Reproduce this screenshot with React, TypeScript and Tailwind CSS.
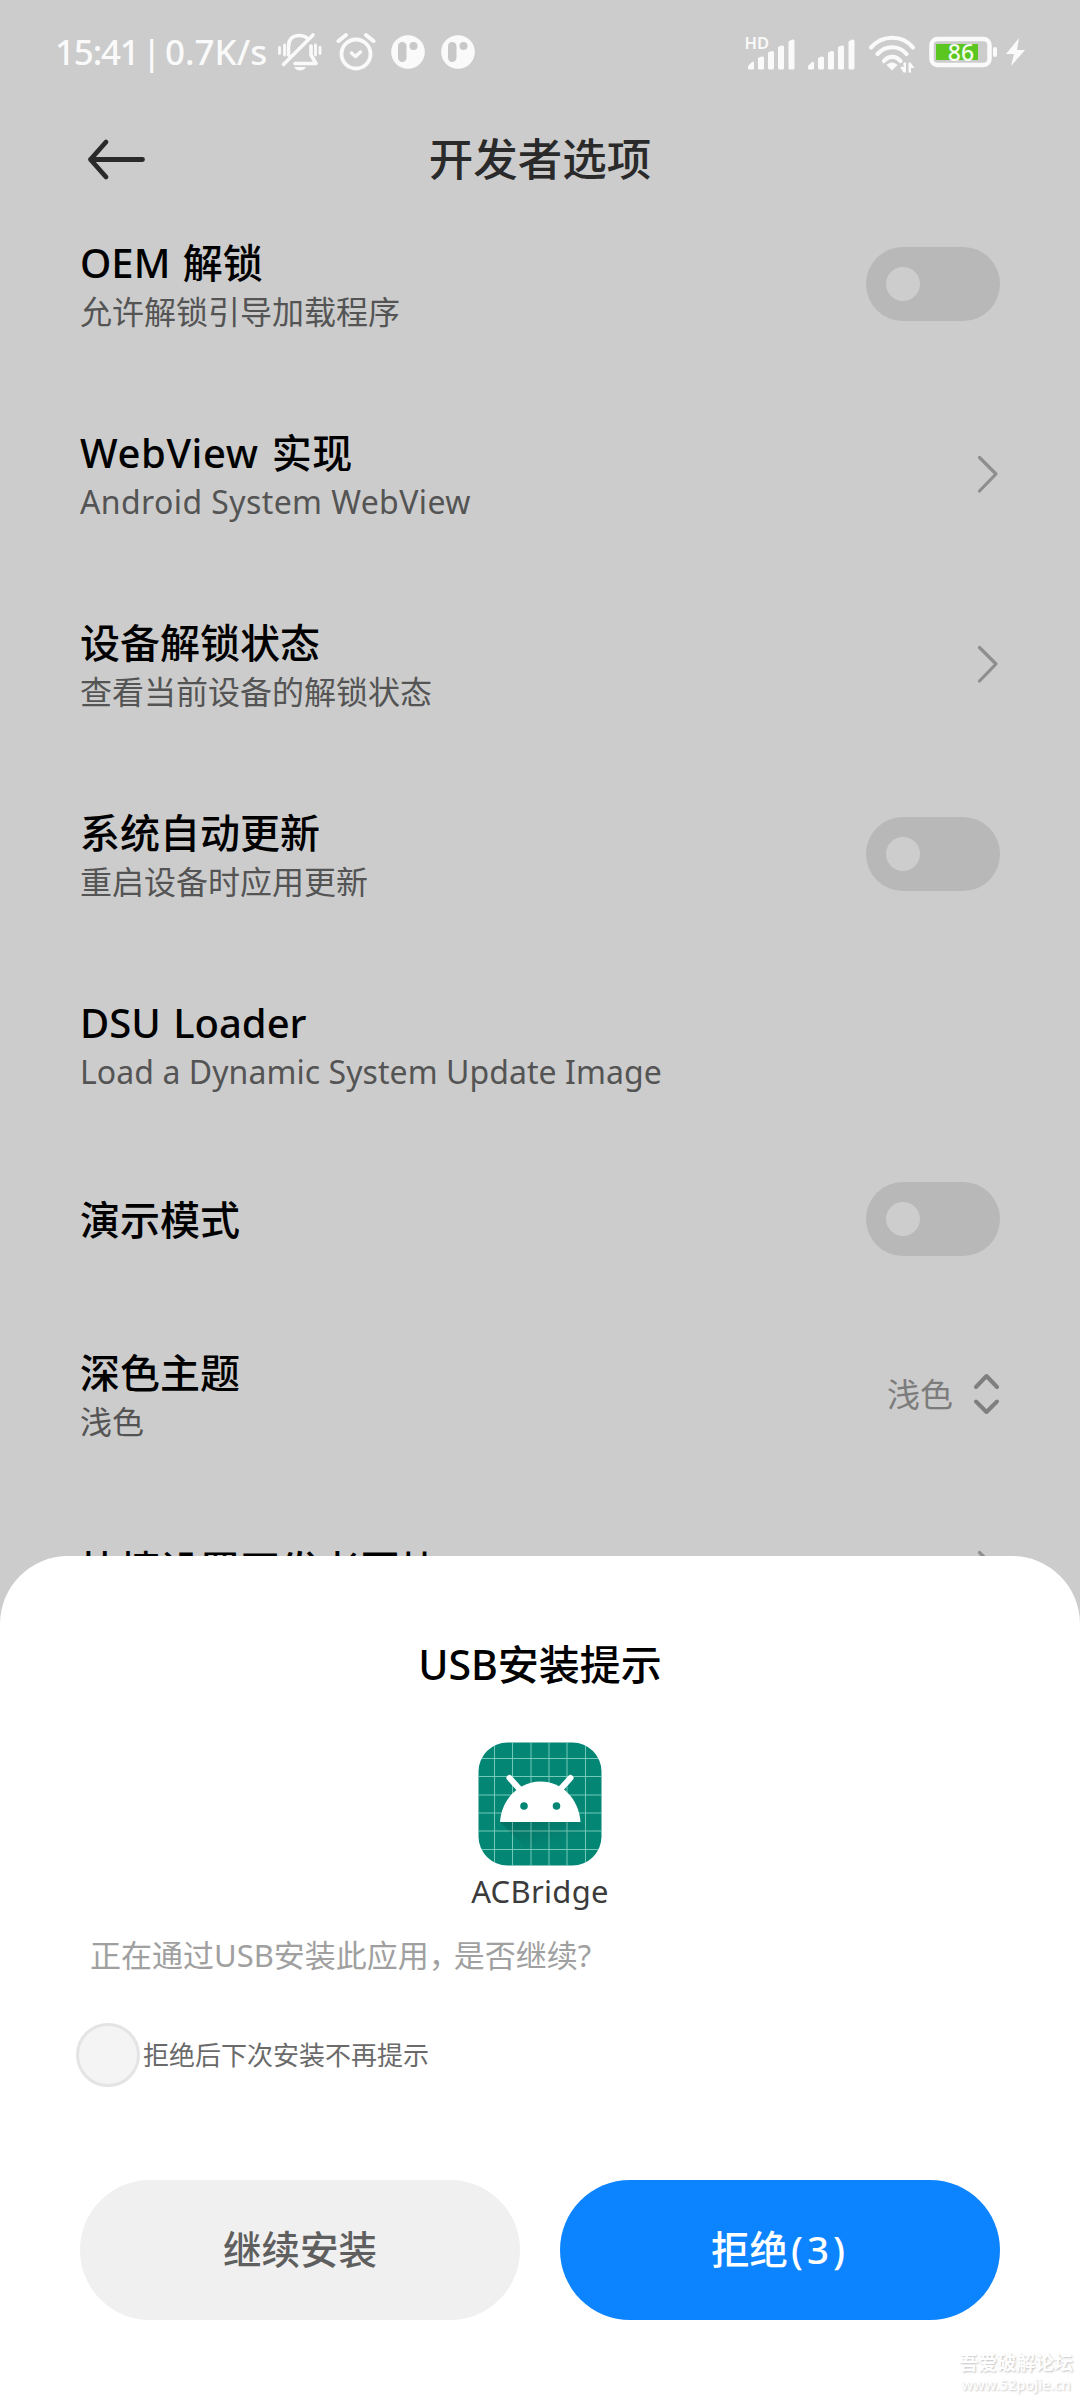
import type { ReactNode } from 'react'

type RowProps = {
  title: string
  summary?: string
  titleClassName?: string
  summaryClassName?: string
  children?: ReactNode
}

export default function App() {
  return (
    <div className="relative h-[2400px] w-[1080px] overflow-hidden bg-[#cccccc] font-['Noto_Sans','Noto_Sans_CJK_SC',sans-serif] text-black">
      <StatusBar />
      <header className="grid h-[85px] grid-cols-[1fr_auto_1fr] items-center px-[80px] pt-[24px]">
        <BackArrow />
        <h1 className="text-[44.5px] font-medium leading-[60px] text-[#2a2a2a]">
          开发者选项
        </h1>
      </header>

      <main className="flex flex-col">
        <Row title="OEM 解锁" summary="允许解锁引导加载程序">
          <Toggle />
        </Row>
        <Row
          title="WebView 实现"
          titleClassName="tracking-[0.6px]"
          summary="Android System WebView"
          summaryClassName="tracking-[0.4px]"
        >
          <Chevron />
        </Row>
        <Row title="设备解锁状态" summary="查看当前设备的解锁状态">
          <Chevron />
        </Row>
        <Row title="系统自动更新" summary="重启设备时应用更新">
          <Toggle />
        </Row>
        <Row
          title="DSU Loader"
          summary="Load a Dynamic System Update Image"
          summaryClassName="tracking-[0.06px]"
        />
        <Row title="演示模式">
          <Toggle />
        </Row>
        <Row title="深色主题" summary="浅色">
          <div className="flex items-center gap-[19px]">
            <span className="pt-[2px] text-[33px] leading-[48px] text-[#7c7c7c]">
              浅色
            </span>
            <UpDown />
          </div>
        </Row>
        <Row title="快捷设置开发者图块">
          <Chevron />
        </Row>
      </main>

      <InstallSheet />
      <Watermark />
    </div>
  )
}

function StatusBar() {
  return (
    <div className="flex h-[104px] items-center justify-between pl-[55px] pr-[54px] text-[#fafafa]">
      <div className="flex items-center">
        <div className="flex w-[222px] whitespace-nowrap text-[35px] font-medium leading-[48px]">
          <span className="w-[87px] tracking-[-1.2px]">15:41</span>
          <span className="w-[23px]">|</span>
          <span>0.7K/s</span>
        </div>
        <MutedBell />
        <AlarmClock />
        <div className="ml-[15px] flex gap-[16px]">
          <AppDot />
          <AppDot />
        </div>
      </div>
      <div className="flex items-center">
        <Signal hd />
        <Signal />
        <Wifi />
        <Battery />
        <svg width="20" height="40" viewBox="0 0 20 40" className="ml-[7px]">
          <path d="M13 6 0 22h8L5 34 19 18h-8z" fill="currentColor" />
        </svg>
      </div>
    </div>
  )
}

function Row({
  title,
  summary,
  titleClassName = '',
  summaryClassName = '',
  children,
}: RowProps) {
  return (
    <section
      className={`flex items-center justify-between px-[80px] ${summary ? 'h-[190px]' : 'h-[160px]'}`}
    >
      <div className={summary ? 'pt-[6px]' : 'pt-[2px]'}>
        <h2
          className={`text-[40px] font-medium leading-[50px] [word-spacing:2px] ${titleClassName}`}
        >
          {title}
        </h2>
        {summary && (
          <p
            className={`text-[32px] leading-[48px] text-[#545454] ${summaryClassName}`}
          >
            {summary}
          </p>
        )}
      </div>
      {children}
    </section>
  )
}

function Toggle() {
  return (
    <div className="flex h-[74px] w-[134px] items-center rounded-full bg-[#b8b8b8] pl-[20px]">
      <div className="size-[34px] rounded-full bg-[#cdcdcd]" />
    </div>
  )
}

function Chevron() {
  return (
    <svg width="24" height="40" viewBox="0 0 24 40" fill="none">
      <path
        d="M3.5 3.5 20 20 3.5 37"
        stroke="#8e8e8e"
        strokeWidth="3.2"
        strokeLinecap="round"
        strokeLinejoin="round"
      />
    </svg>
  )
}

function UpDown() {
  return (
    <svg width="28" height="44" viewBox="0 0 28 44" fill="none">
      <path
        d="m4 15 10.500-11L25 15M4 29.500 14.500 40 25 29.500"
        stroke="#7f7f7f"
        strokeWidth="4"
        strokeLinecap="round"
        strokeLinejoin="round"
      />
    </svg>
  )
}

function BackArrow() {
  return (
    <svg width="70" height="48" viewBox="0 0 70 48" fill="none">
      <path
        d="M26 7 10.500 24.500 26 42M10.500 24.500H62.500"
        stroke="#2a2a2a"
        strokeWidth="4.800"
        strokeLinecap="round"
        strokeLinejoin="round"
      />
    </svg>
  )
}

function MutedBell() {
  return (
    <svg
      width="46"
      height="42"
      viewBox="0 0 46 42"
      fill="none"
      stroke="currentColor"
      strokeWidth="3.6"
      strokeLinecap="round"
      strokeLinejoin="round"
    >
      <path d="M11.500 24V15.500C11.500 8 16 4.500 22.500 4.500c3 0 5.500.800 7.500 2.500M34 15v9l5 8.500H18M36 4 6.500 33.500" />
      <path d="M2.500 16.500v6M7.500 14v10M38.500 14v10M43 16.500v6" strokeWidth="2.800" />
      <path d="M17 36h12c-1.500 2.500-3.500 3.500-6 3.500S18.500 38.500 17 36z" fill="currentColor" stroke="none" />
    </svg>
  )
}

function AlarmClock() {
  return (
    <svg
      width="40"
      height="42"
      viewBox="0 0 40 42"
      fill="none"
      stroke="currentColor"
      strokeLinecap="round"
      className="ml-[13px]"
    >
      <circle cx="20" cy="23" r="14.500" strokeWidth="3.800" />
      <path d="m2.500 10 7.500-6M37.500 10 30 4" strokeWidth="4" />
      <path d="m15.500 22 4 3.500 5-4.500" strokeWidth="3.500" strokeLinejoin="round" />
    </svg>
  )
}

function AppDot() {
  return (
    <svg width="34" height="34" viewBox="0 0 34 34">
      <circle cx="17" cy="17" r="16.800" fill="currentColor" />
      <rect x="7" y="7" width="8.500" height="20" rx="4.200" fill="#c8c8c8" />
      <circle cx="22.500" cy="11" r="4" fill="#c8c8c8" />
    </svg>
  )
}

function Signal({ hd = false }: { hd?: boolean }) {
  return (
    <svg
      width="60"
      height="42"
      viewBox="0 0 60 42"
      fill="currentColor"
    >
      {hd && (
        <text x="-0.500" y="17.500" fontSize="16.500" fontWeight="600">
          HD
        </text>
      )}
      <path d="M3 37.500v-2.500l4-4q2-1 2 1v5.500q0 1-1 1H4q-1 0-1-1z" />
      <path d="M13 37V27l3.500-1.500q2.500-.500 2.500 1.500v10q0 1.500-1.500 1.500h-3q-1.500 0-1.500-1.500z" />
      <path d="M23 37V21.500l3.500-1.500q2.500-.500 2.500 1.500V37q0 1.500-1.500 1.500h-3Q23 38.500 23 37z" />
      <path d="M33 37V16l3.500-1.500q2.500-.500 2.500 1.500v21q0 1.500-1.500 1.500h-3Q33 38.500 33 37z" />
      <path d="M43.500 37V10.500l3.500-2q2.500-.500 2.500 1.500v27q0 1.500-1.500 1.500h-3q-1.500 0-1.500-1.500z" />
    </svg>
  )
}

function Wifi() {
  return (
    <svg
      width="48"
      height="42"
      viewBox="0 0 48 42"
      fill="none"
      className="ml-[3px]"
    >
      <g stroke="currentColor" strokeWidth="4.200" strokeLinecap="round">
        <path d="M3 16.500C14.500 3.500 34 3.500 45 16.500" />
        <path d="M9.500 23c8-9 21.500-9 29 0" />
        <path d="M16 30c4.500-5.500 12-5.500 16.500 0" />
      </g>
      <path d="M24 39.500 18.500 34c3-3.500 8-3.500 11 0z" fill="currentColor" />
      <path
        d="M35.500 31.500h2.500v10h-2.500l-3.500-5.500h3.500zM40.500 41.500v-10h2l4 5.500H43v4.500z"
        fill="currentColor"
      />
    </svg>
  )
}

function Battery() {
  return (
    <svg width="70" height="32" viewBox="0 0 70 32" className="ml-[13px]">
      <rect
        x="2.500"
        y="3"
        width="58"
        height="26"
        rx="6"
        fill="none"
        stroke="currentColor"
        strokeWidth="4.500"
      />
      <rect x="7" y="8" width="42" height="16" rx="1" fill="#5ac61f" />
      <rect x="64" y="11" width="4" height="10" rx="2" fill="currentColor" />
      <text
        x="32"
        y="24.500"
        fontSize="23"
        fontWeight="500"
        fill="#f4fbf0"
        textAnchor="middle"
      >
        86
      </text>
    </svg>
  )
}

function InstallSheet() {
  return (
    <div
      role="dialog"
      className="absolute inset-x-0 bottom-0 flex h-[844px] flex-col rounded-t-[68px] bg-white px-[80px] pt-[78px]"
    >
      <h2 className="text-center text-[41px] font-medium leading-[60px]">
        USB安装提示
      </h2>
      <div className="mt-[48px] flex flex-col items-center">
        <AppIcon />
        <p className="mt-px text-[31px] leading-[48px] tracking-[0.3px] text-[#3b3b3b]">
          ACBridge
        </p>
      </div>
      <p className="ml-[10px] mt-[16px] text-[31px] leading-[48px] text-[#a0a0a0]">
        正在通过USB安装此应用<span className="tracking-[-6px]">，</span>
        是否继续?
      </p>
      <label className="-ml-[4px] mt-[44px] flex items-center gap-[3px]">
        <span className="size-[64px] rounded-full border-[3px] border-[#e4e4e4] bg-[#f4f4f4]" />
        <span className="text-[26px] leading-[40px] text-[#6a6a6a]">
          拒绝后下次安装不再提示
        </span>
      </label>
      <div className="mt-[93px] grid grid-cols-2 gap-[40px] text-[38.5px] font-medium">
        <button className="h-[140px] rounded-full bg-[#f0f0f0] text-[#5f5f5f]">
          继续安装
        </button>
        <button className="h-[140px] rounded-full bg-[#0d84ff] text-white">
          拒绝<span className="ml-[3px] tracking-[4px]">(3)</span>
        </button>
      </div>
    </div>
  )
}

function AppIcon() {
  const lines = [16, 34, 52.5, 70.5, 88.5, 107]

  return (
    <svg width="124" height="124" viewBox="0 0 124 124">
      <defs>
        <clipPath id="tile">
          <rect x="0.500" y="0.500" width="123" height="123" rx="29" />
        </clipPath>
        <linearGradient id="shade" x1="0" y1="0" x2="0.700" y2="1">
          <stop offset="0" stopColor="#000" stopOpacity="0.160" />
          <stop offset="0.600" stopColor="#000" stopOpacity="0" />
        </linearGradient>
      </defs>
      <g clipPath="url(#tile)">
        <rect width="124" height="124" fill="#048675" />
        <g stroke="#7fd0bf" strokeWidth="0.900">
          {lines.map((pos) => (
            <path key={pos} d={`M${pos + 0.5} 0V124M0 ${pos + 0.5}H124`} />
          ))}
        </g>
        <path d="M22 80 66 124H124V102L102 80z" fill="url(#shade)" />
      </g>
      <path d="M22 80C23.500 57 41 39.500 62.500 39.500S101 57 102.500 80z" fill="#fff" />
      <path
        d="m31.500 36 10 11M92.500 36l-10 11"
        stroke="#fff"
        strokeWidth="6"
        strokeLinecap="round"
      />
      <circle cx="46" cy="64" r="3.800" fill="#048675" />
      <circle cx="78.500" cy="64" r="3.800" fill="#048675" />
    </svg>
  )
}

function Watermark() {
  return (
    <div className="absolute bottom-[6px] right-[7px] flex flex-col items-center text-white [text-shadow:1px_1px_2px_#c4c4c4]">
      <span className="text-[19px] font-bold leading-[23px]">吾爱破解论坛</span>
      <span className="text-[14.500px] font-medium leading-[19px]">
        www.52pojie.cn
      </span>
    </div>
  )
}
